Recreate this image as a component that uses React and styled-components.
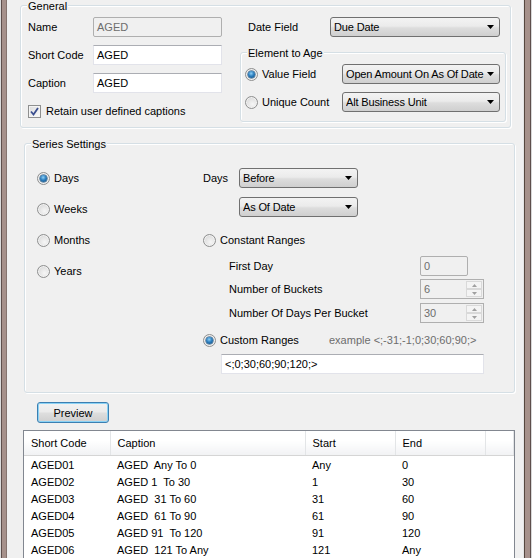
import styled, { createGlobalStyle } from "styled-components";

const rows = [
  ["AGED01", "AGED  Any To 0", "Any", "0"],
  ["AGED02", "AGED 1  To 30", "1", "30"],
  ["AGED03", "AGED  31 To 60", "31", "60"],
  ["AGED04", "AGED  61 To 90", "61", "90"],
  ["AGED05", "AGED 91  To 120", "91", "120"],
  ["AGED06", "AGED  121 To Any", "121", "Any"],
];

const GlobalStyle = createGlobalStyle`
  html, body {
    margin: 0;
    padding: 0;
    background: #f0f0f0;
    overflow: hidden;
  }
  body {
    font-family: "Liberation Sans", Arial, sans-serif;
    font-size: 11px;
    color: #000;
  }
  * {
    box-sizing: border-box;
  }
`;

const Arrow = () => (
  <svg width="7" height="4" viewBox="0 0 7 4">
    <path d="M0 0H7L3.5 4Z" fill="#000" />
  </svg>
);

const Radio = ({ checked }) => (
  <RadioCircle>{checked && <RadioDot />}</RadioCircle>
);

const Combo = ({ children, width }) => (
  <ComboBox $width={width}>
    <span>{children}</span>
    <Arrow />
  </ComboBox>
);

const Spinner = ({ value }) => (
  <SpinBox>
    <span>{value}</span>
    <SpinButtons>
      <SpinButton>
        <svg width="5" height="3" viewBox="0 0 5 3">
          <path d="M0 3H5L2.5 0Z" fill="#a0a0a0" />
        </svg>
      </SpinButton>
      <SpinButton>
        <svg width="5" height="3" viewBox="0 0 5 3">
          <path d="M0 0H5L2.5 3Z" fill="#a0a0a0" />
        </svg>
      </SpinButton>
    </SpinButtons>
  </SpinBox>
);

const App = () => {
  return (
    <>
      <GlobalStyle />
      <Frame>
        <LeftEdge />
        <Content>
          <GeneralGroup>
            <Legend>General</Legend>
            <LeftColumn>
              <FieldRow>
                <FieldLabel>Name</FieldLabel>
                <TextBox $disabled>AGED</TextBox>
              </FieldRow>
              <FieldRow>
                <FieldLabel>Short Code</FieldLabel>
                <TextBox>AGED</TextBox>
              </FieldRow>
              <FieldRow>
                <FieldLabel>Caption</FieldLabel>
                <TextBox>AGED</TextBox>
              </FieldRow>
              <CheckRow>
                <CheckBox>
                  <svg width="9" height="9" viewBox="0 0 9 9">
                    <path
                      d="M1 4.5L3.5 7.5L8 1"
                      fill="none"
                      stroke="#3b4f8f"
                      strokeWidth="1.8"
                    />
                  </svg>
                </CheckBox>
                Retain user defined captions
              </CheckRow>
            </LeftColumn>
            <RightColumn>
              <DateRow>
                <DateLabel>Date Field</DateLabel>
                <Combo width={170}>Due Date</Combo>
              </DateRow>
              <ElementGroup>
                <Legend>Element to Age</Legend>
                <ElementRow>
                  <RadioLabel $width={97}>
                    <Radio checked />
                    Value Field
                  </RadioLabel>
                  <Combo width={158}>Open Amount On As Of Date</Combo>
                </ElementRow>
                <ElementRow>
                  <RadioLabel $width={97}>
                    <Radio />
                    Unique Count
                  </RadioLabel>
                  <Combo width={158}>Alt Business Unit</Combo>
                </ElementRow>
              </ElementGroup>
            </RightColumn>
          </GeneralGroup>

          <SeriesGroup>
            <Legend>Series Settings</Legend>
            <PeriodColumn>
              {["Days", "Weeks", "Months", "Years"].map((p, i) => (
                <PeriodRow key={p}>
                  <RadioLabel>
                    <Radio checked={i === 0} />
                    {p}
                  </RadioLabel>
                </PeriodRow>
              ))}
            </PeriodColumn>
            <RangeColumn>
              <SeriesRow>
                <DaysLabel>Days</DaysLabel>
                <Combo width={119}>Before</Combo>
              </SeriesRow>
              <SeriesRow $top={9} $indent={36}>
                <Combo width={119}>As Of Date</Combo>
              </SeriesRow>
              <SeriesRow $top={13}>
                <RadioLabel>
                  <Radio />
                  Constant Ranges
                </RadioLabel>
              </SeriesRow>
              <SeriesRow $top={6} $indent={26}>
                <RangeLabel>First Day</RangeLabel>
                <DisabledBox>0</DisabledBox>
              </SeriesRow>
              <SeriesRow $top={3} $indent={26}>
                <RangeLabel>Number of Buckets</RangeLabel>
                <Spinner value="6" />
              </SeriesRow>
              <SeriesRow $top={4} $indent={26}>
                <RangeLabel>Number Of Days Per Bucket</RangeLabel>
                <Spinner value="30" />
              </SeriesRow>
              <SeriesRow $top={7}>
                <RadioLabel $width={126}>
                  <Radio checked />
                  Custom Ranges
                </RadioLabel>
                <Hint>example &lt;;-31;-1;0;30;60;90;&gt;</Hint>
              </SeriesRow>
              <SeriesRow $top={4} $indent={18}>
                <TextBox $width={263}>&lt;;0;30;60;90;120;&gt;</TextBox>
              </SeriesRow>
            </RangeColumn>
          </SeriesGroup>

          <PreviewButton type="button">Preview</PreviewButton>

          <ListView>
            <Table>
              <colgroup>
                <col style={{ width: 86 }} />
                <col style={{ width: 195 }} />
                <col style={{ width: 90 }} />
                <col style={{ width: 90 }} />
                <col />
              </colgroup>
              <thead>
                <tr>
                  <HeadCell>Short Code</HeadCell>
                  <HeadCell>Caption</HeadCell>
                  <HeadCell>Start</HeadCell>
                  <HeadCell>End</HeadCell>
                  <HeadCell />
                </tr>
              </thead>
              <tbody>
                {rows.map((r) => (
                  <tr key={r[0]}>
                    {r.map((c, i) => (
                      <Cell key={i}>{c}</Cell>
                    ))}
                    <Cell />
                  </tr>
                ))}
              </tbody>
            </Table>
          </ListView>
        </Content>
        <RightEdge />
      </Frame>
    </>
  );
};

export default App;

const Frame = styled.div`
  display: flex;
  width: 532px;
  height: 558px;
  overflow: hidden;
  background: #f0f0f0;
`;

const LeftEdge = styled.div`
  width: 7px;
  flex-shrink: 0;
  background: linear-gradient(
    to right,
    #dcdcdc 0 1px,
    #5e4f4c 1px 2px,
    #a6918b 2px 6px,
    #85746f 6px 7px
  );
`;

const RightEdge = styled.div`
  width: 9px;
  flex-shrink: 0;
  background: linear-gradient(
    to right,
    #e4e4e4 0 1px,
    #56473f 1px 2px,
    #a6918b 2px 7px,
    #5e4f4c 7px 8px,
    #d8d8d8 8px 9px
  );
`;

const Content = styled.div`
  flex: 1;
  display: flex;
  flex-direction: column;
  align-items: flex-start;
  min-height: 0;
  overflow: hidden;

  & > * {
    flex-shrink: 0;
  }
`;

const Group = styled.div`
  position: relative;
  border: 1px solid #d5dfe5;
  border-radius: 3px;
  box-shadow: inset 1px 1px 0 #fff, 1px 1px 0 #fff;
`;

const Legend = styled.span`
  position: absolute;
  top: -6px;
  left: 6px;
  padding: 0 1px;
  line-height: 13px;
  background: #f0f0f0;
  white-space: nowrap;
`;

const GeneralGroup = styled(Group)`
  display: flex;
  width: 491px;
  height: 123px;
  margin: 5px 0 0 13px;
  padding: 11px 0 0 7px;
`;

const LeftColumn = styled.div`
  display: flex;
  flex-direction: column;
  gap: 8px;
  width: 212px;
`;

const FieldRow = styled.div`
  display: flex;
  align-items: center;
  height: 20px;
`;

const FieldLabel = styled.span`
  width: 65px;
`;

const TextBox = styled.div`
  display: flex;
  align-items: center;
  width: ${({ $width }) => $width || 129}px;
  height: 20px;
  padding-left: 3px;
  border: 1px solid ${({ $disabled }) => ($disabled ? "#afafaf" : "#e2e3ea")};
  border-top-color: ${({ $disabled }) => ($disabled ? "#afafaf" : "#abadb3")};
  border-radius: ${({ $disabled }) => ($disabled ? "2px" : "0")};
  background: ${({ $disabled }) => ($disabled ? "#f0f0f0" : "#fff")};
  color: ${({ $disabled }) => ($disabled ? "#6d6d6d" : "#000")};
`;

const CheckRow = styled.div`
  display: flex;
  align-items: center;
  gap: 5px;
  height: 14px;
  margin-top: 3px;
  white-space: nowrap;
`;

const CheckBox = styled.span`
  display: flex;
  align-items: center;
  justify-content: center;
  width: 13px;
  height: 13px;
  border: 1px solid #8e8f8f;
  background: linear-gradient(135deg, #dcdcdc, #fbfbfb);
  box-shadow: inset 0 0 0 1px #f4f4f4;
`;

const RightColumn = styled.div`
  display: flex;
  flex-direction: column;
  width: 266px;
`;

const DateRow = styled.div`
  display: flex;
  align-items: center;
  height: 20px;
  padding-left: 8px;
`;

const DateLabel = styled.span`
  width: 82px;
`;

const ComboBox = styled.div`
  display: flex;
  align-items: center;
  width: ${({ $width }) => $width}px;
  height: 20px;
  padding: 0 5px 0 3px;
  border: 1px solid #707070;
  border-radius: 3px;
  background: linear-gradient(#f3f3f3 0%, #ebebeb 45%, #dddddd 55%, #cfcfcf 100%);
  white-space: nowrap;
  overflow: hidden;

  span {
    flex: 1;
    min-width: 0;
    overflow: hidden;
    letter-spacing: -0.15px;
  }

  svg {
    flex-shrink: 0;
    margin-left: 2px;
  }
`;

const ElementGroup = styled(Group)`
  display: flex;
  flex-direction: column;
  gap: 8px;
  height: 70px;
  margin-top: 15px;
  padding: 11px 0 0 4px;
`;

const ElementRow = styled.div`
  display: flex;
  align-items: center;
  height: 20px;
`;

const RadioLabel = styled.span`
  display: flex;
  align-items: center;
  gap: 4px;
  width: ${({ $width }) => ($width ? `${$width}px` : "auto")};
  white-space: nowrap;
`;

const RadioCircle = styled.span`
  display: flex;
  align-items: center;
  justify-content: center;
  width: 13px;
  height: 13px;
  border: 1px solid #8e8f8f;
  border-radius: 50%;
  background: radial-gradient(circle at 60% 65%, #f6f6f6 0%, #e2e2e2 55%, #c9c9c9 100%);
  box-shadow: inset 0 0 0 1px #f2f2f2;
`;

const RadioDot = styled.span`
  width: 7px;
  height: 7px;
  border-radius: 50%;
  background: radial-gradient(circle at 45% 35%, #8fd0f5 0%, #2d7fbf 45%, #0f4675 100%);
  box-shadow: 0 0 0 0.5px #1d4e78;
`;

const SeriesGroup = styled(Group)`
  display: flex;
  width: 491px;
  height: 250px;
  margin: 15px 0 0 17px;
  padding: 24px 0 0 12px;
`;

const PeriodColumn = styled.div`
  display: flex;
  flex-direction: column;
  gap: 11px;
  width: 166px;
`;

const PeriodRow = styled.div`
  display: flex;
  align-items: center;
  height: 20px;
`;

const RangeColumn = styled.div`
  display: flex;
  flex-direction: column;
`;

const SeriesRow = styled.div`
  display: flex;
  align-items: center;
  height: 20px;
  margin-top: ${({ $top }) => $top || 0}px;
  padding-left: ${({ $indent }) => $indent || 0}px;
`;

const DaysLabel = styled.span`
  width: 36px;
`;

const RangeLabel = styled.span`
  width: 191px;
`;

const DisabledBox = styled.div`
  display: flex;
  align-items: center;
  width: 48px;
  height: 20px;
  padding-left: 3px;
  border: 1px solid #afafaf;
  border-radius: 2px;
  color: #6d6d6d;
`;

const SpinBox = styled.div`
  display: flex;
  align-items: center;
  justify-content: space-between;
  width: 64px;
  height: 20px;
  padding: 1px 1px 1px 3px;
  border: 1px solid #afafaf;
  color: #6d6d6d;
`;

const SpinButtons = styled.div`
  display: flex;
  flex-direction: column;
  width: 16px;
  height: 100%;
`;

const SpinButton = styled.span`
  flex: 1;
  display: flex;
  align-items: center;
  justify-content: center;
  border: 1px solid #d9d9d9;
  background: #f4f4f4;
`;

const Hint = styled.span`
  color: #6d6d6d;
  white-space: nowrap;
`;

const PreviewButton = styled.button`
  width: 72px;
  height: 21px;
  margin: 9px 0 0 30px;
  padding: 0;
  border: 1px solid #3c7fb1;
  border-radius: 3px;
  background: linear-gradient(#f2f2f2 0%, #ebebeb 45%, #dddddd 55%, #cfcfcf 100%);
  box-shadow: inset 0 0 0 1px #8ad2f5;
  font-family: "Liberation Sans", Arial, sans-serif;
  font-size: 11px;
  color: #000;
`;

const ListView = styled.div`
  width: 492px;
  height: 140px;
  margin: 7px 0 0 16px;
  border: 1px solid #828790;
  border-bottom: none;
  background: #fff;
`;

const Table = styled.table`
  width: 100%;
  table-layout: fixed;
  border-collapse: collapse;
`;

const HeadCell = styled.th`
  height: 24px;
  padding: 1px 0 0 7px;
  text-align: left;
  font-weight: normal;
  background: linear-gradient(#ffffff 0%, #ffffff 40%, #f1f2f4 100%);
  border-right: 1px solid #e3e5e7;
  border-bottom: 1px solid #d5d5d5;
  white-space: nowrap;
`;

const Cell = styled.td`
  height: 17px;
  line-height: 17px;
  padding: 0 0 0 7px;
  white-space: pre;
  overflow: hidden;

  tr:first-child > & {
    padding-top: 1px;
    height: 18px;
  }
`;
